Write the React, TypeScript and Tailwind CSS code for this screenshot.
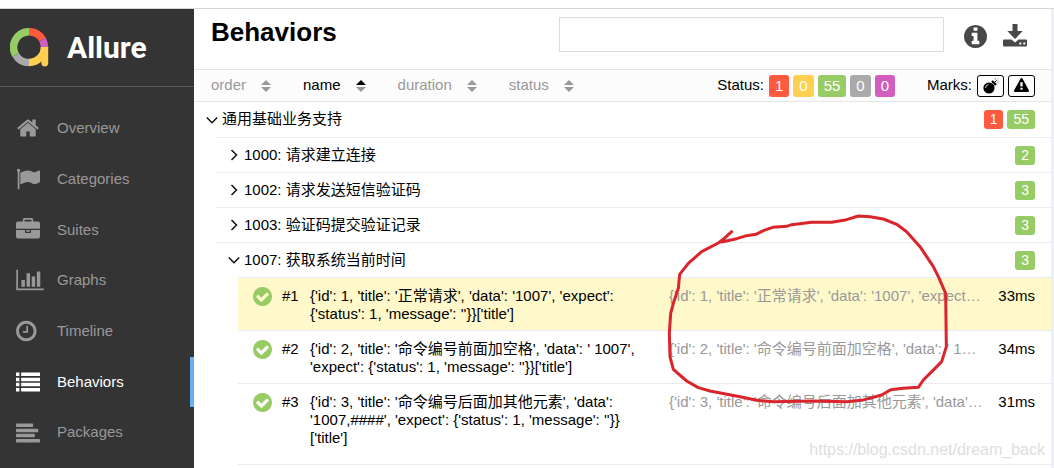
import { ReactNode } from 'react';
import clsx from 'clsx';

const DISC = 'M1664 896q0 209-103 385.5t-279.5 279.5-385.5 103-385.5-103-279.5-279.5-103-385.5 103-385.5 279.5-279.5 385.5-103 385.5 103 279.5 279.5 103 385.5z';

const ICONS = {
  home: 'M1472 992v480q0 26-19 45t-45 19h-384v-384h-256v384h-384q-26 0-45-19t-19-45v-480q0-1 .5-3t.5-3l575-474 575 474q1 2 1 6zm223-69l-62 74q-8 9-21 11h-3q-13 0-21-7l-692-577-692 577q-12 8-24 7-13-2-21-11l-62-74q-8-10-7-23.5t11-21.5l719-599q32-26 76-26t76 26l244 204v-195q0-14 9-23t23-9h192q14 0 23 9t9 23v408l219 182q10 8 11 21.5t-7 23.5z',
  flag: 'M320 256q0 72-64 110v1266q0 13-9.5 22.5t-22.5 9.5h-64q-13 0-22.5-9.5t-9.5-22.5v-1266q-64-38-64-110 0-53 37.5-90.5t90.5-37.5 90.5 37.5 37.5 90.5zm1472 64v763q0 25-12.5 38.5t-39.5 27.5q-215 116-369 116-61 0-123.5-22t-108.5-48-115.5-48-142.5-22q-192 0-464 146-17 9-33 9-26 0-45-19t-19-45v-742q0-32 31-55 21-14 79-43 236-120 421-120 107 0 200 29t219 88q38 19 88 19 54 0 117.5-21t110-47 88-47 54.5-21q26 0 45 19t19 45z',
  briefcase:
    'M640 256h512v-128h-512v128zm1152 640v480q0 66-47 113t-113 47h-1472q-66 0-113-47t-47-113v-480h672v160q0 26 19 45t45 19h320q26 0 45-19t19-45v-160h672zm-768 0v128h-256v-128h256zm768-480v384h-1792v-384q0-66 47-113t113-47h352v-160q0-40 28-68t68-28h576q40 0 68 28t28 68v160h352q66 0 113 47t47 113z',
  chart:
    'M640 896v512h-256v-512h256zm384-512v1024h-256v-1024h256zm1024 1152v128h-2048v-1536h128v1408h1920zm-640-896v768h-256v-768h256zm384-384v1152h-256v-1152h256z',
  clock:
    'M1024 544v448q0 14-9 23t-23 9h-320q-14 0-23-9t-9-23v-64q0-14 9-23t23-9h224v-352q0-14 9-23t23-9h64q14 0 23 9t9 23zm416 352q0-148-73-273t-198-198-273-73-273 73-198 198-73 273 73 273 198 198 273 73 273-73 198-198 73-273z' +
    DISC,
  list: 'M0 192h256v256h-256zM384 192h1408v256h-1408zM0 576h256v256h-256zM384 576h1408v256h-1408zM0 960h256v256h-256zM384 960h1408v256h-1408zM0 1344h256v256h-256zM384 1344h1408v256h-1408z',
  align:
    'M64 192h1152q64 0 64 64v128q0 64-64 64h-1152q-64 0-64-64v-128q0-64 64-64zM64 576h1536q64 0 64 64v128q0 64-64 64h-1536q-64 0-64-64v-128q0-64 64-64zM64 960h1280q64 0 64 64v128q0 64-64 64h-1280q-64 0-64-64v-128q0-64 64-64zM64 1344h1664q64 0 64 64v128q0 64-64 64h-1664q-64 0-64-64v-128q0-64 64-64z',
  info:
    'M1152 1376v-160q0-14-9-23t-23-9h-96v-512q0-14-9-23t-23-9h-320q-14 0-23 9t-9 23v160q0 14 9 23t23 9h96v320h-96q-14 0-23 9t-9 23v160q0 14 9 23t23 9h448q14 0 23-9t9-23zm-128-896v-160q0-14-9-23t-23-9h-192q-14 0-23 9t-9 23v160q0 14 9 23t23 9h192q14 0 23-9t9-23z' +
    DISC,
  check:
    'M1412 734q0-28-18-46l-91-90q-19-19-45-19t-45 19l-408 407-226-226q-19-19-45-19t-45 19l-91 90q-18 18-18 46 0 27 18 45l362 362q19 19 45 19 27 0 46-19l543-543q18-18 18-45z' +
    DISC,
  warning:
    'M1024 1375v-190q0-14-9.5-23.5t-22.5-9.5h-192q-13 0-22.5 9.5t-9.5 23.5v190q0 14 9.5 23.5t22.5 9.5h192q13 0 22.5-9.5t9.5-23.5zm-2-374l18-459q0-12-10-19-13-11-24-11h-220q-11 0-24 11-10 7-10 21l17 457q0 10 10 16.5t24 6.5h185q14 0 23.5-6.5t10.5-16.5zm-14-934l768 1408q35 63-2 126-17 29-46.5 46t-63.5 17h-1536q-34 0-63.5-17t-46.5-46q-37-63-2-126l768-1408q17-31 47-49t65-18 65 18 47 49z',
};

function Icon({ name, viewBox = '0 0 1792 1792', className }: { name: keyof typeof ICONS; viewBox?: string; className?: string }) {
  return (
    <svg viewBox={viewBox} className={className} fill="currentColor" fillRule="evenodd" aria-hidden="true">
      <path d={ICONS[name]} />
    </svg>
  );
}

const NAV: { label: string; icon: keyof typeof ICONS; box?: string; size?: string }[] = [
  { label: 'Overview', icon: 'home', box: '0 0 1792 1792' },
  { label: 'Categories', icon: 'flag' },
  { label: 'Suites', icon: 'briefcase' },
  { label: 'Graphs', icon: 'chart', box: '0 0 2048 1792', size: 'w-7 h-6' },
  { label: 'Timeline', icon: 'clock', box: '128 0 1792 1792' },
  { label: 'Behaviors', icon: 'list' },
  { label: 'Packages', icon: 'align' },
];

const SUITES = [
  { name: '1000: 请求建立连接', count: 2 },
  { name: '1002: 请求发送短信验证码', count: 3 },
  { name: '1003: 验证码提交验证记录', count: 3 },
  { name: '1007: 获取系统当前时间', count: 3, open: true },
];

const CASES = [
  {
    name: "{'id': 1, 'title': '正常请求', 'data': '1007', 'expect': {'status': 1, 'message': ''}}['title']",
    params: "{'id': 1, 'title': '正常请求', 'data': '1007', 'expect…",
    time: '33ms',
  },
  {
    name: "{'id': 2, 'title': '命令编号前面加空格', 'data': ' 1007', 'expect': {'status': 1, 'message': ''}}['title']",
    params: "{'id': 2, 'title': '命令编号前面加空格', 'data': ' 1…",
    time: '34ms',
  },
  {
    name: "{'id': 3, 'title': '命令编号后面加其他元素', 'data': '1007,####', 'expect': {'status': 1, 'message': ''}}['title']",
    params: "{'id': 3, 'title': '命令编号后面加其他元素', 'data'…",
    time: '31ms',
  },
];

function Logo() {
  return (
    <svg viewBox="0 0 39 39" className="w-[39px] h-[39px]" fill="none" strokeWidth="7.5" aria-hidden="true">
      <path d="M19 34.5A15.5 15.5 0 0 1 5.6 26.8" stroke="#a9a9a9" />
      <path d="M5.6 26.8A15.5 15.5 0 0 1 19 3.7" stroke="#97cc64" />
      <path d="M19 3.7A15.5 15.5 0 0 1 32.4 11.5" stroke="#fd5a3e" />
      <path d="M32.4 11.5A15.5 15.5 0 0 1 34.5 19.3" stroke="#d35ebe" />
      <path d="M34.5 19A15.5 15.5 0 0 1 19 34.5" stroke="#ffd050" />
      <path d="M30.8 19H38.2V35a3.4 3.4 0 0 1-6.8 0z" fill="#ffd050" />
    </svg>
  );
}

function Chevron({ open }: { open?: boolean }) {
  return (
    <svg viewBox="0 0 12 12" className="w-3 h-3 shrink-0" fill="none" stroke="#111" strokeWidth="1.5" aria-hidden="true">
      <path d={open ? 'M.8 3.5L6 8.7 11.2 3.5' : 'M3.5 1L8.5 6 3.5 11'} />
    </svg>
  );
}

function SortIcon({ active }: { active?: boolean }) {
  return (
    <svg viewBox="0 0 10 12" className="w-[10px] h-3" aria-hidden="true">
      <path d="M0 5L5 0l5 5z" fill={active ? '#000' : '#999'} />
      <path d="M0 7h10l-5 5z" fill="#999" />
    </svg>
  );
}

function Badge({ color, children }: { color: string; children: ReactNode }) {
  return (
    <span className={clsx('h-[19px] px-[6px] rounded-[3px] text-sm leading-[19px] text-white', color)}>{children}</span>
  );
}

const STATUSES = [
  { label: 'failed', count: 1, color: 'bg-[#fd5a3e]' },
  { label: 'broken', count: 0, color: 'bg-[#ffd050]' },
  { label: 'passed', count: 55, color: 'bg-[#97cc64]' },
  { label: 'skipped', count: 0, color: 'bg-[#aaaaaa]' },
  { label: 'unknown', count: 0, color: 'bg-[#d35ebe]' },
];

function Sidebar() {
  return (
    <aside className="w-[194px] shrink-0 bg-[#343434]">
      <div className="h-[78px] pl-[10px] flex items-center gap-[18px] border-b border-[#5a5a5a]">
        <Logo />
        <span className="text-[30px] font-bold text-white font-[Roboto,sans-serif]">Allure</span>
      </div>
      <nav className="mt-4 h-[355px] grid grid-rows-7">
        {NAV.map((item) => {
          const active = item.label === 'Behaviors';
          return (
            <a
              key={item.label}
              href="#"
              className={clsx(
                'flex items-center pl-4 border-r-4',
                active ? 'text-white border-[#64b0f2]' : 'text-[#999] border-transparent'
              )}
            >
              <span className="w-[41px]">
                <Icon name={item.icon} viewBox={item.box} className={item.size ?? 'w-6 h-6'} />
              </span>
              {item.label}
            </a>
          );
        })}
      </nav>
    </aside>
  );
}

function Toolbar() {
  return (
    <div className="h-[33px] pl-[17px] pr-4 flex items-center justify-between bg-[#fcfcfc] border-y border-[#e5e5e8]">
      <div className="flex gap-8">
        {['order', 'name', 'duration', 'status'].map((key) => (
          <button
            key={key}
            className={clsx('flex items-center gap-[15px]', key === 'name' ? 'text-black' : 'text-[#999]')}
          >
            {key}
            <SortIcon active={key === 'name'} />
          </button>
        ))}
      </div>
      <div className="flex items-center">
        <span className="mr-[5px]">Status:</span>
        <div className="flex gap-1">
          {STATUSES.map((s) => (
            <button
              key={s.label}
              aria-label={s.label}
              className={clsx('h-[22px] px-[6px] rounded-[3px] leading-[22px] text-white', s.color)}
            >
              {s.count}
            </button>
          ))}
        </div>
        <span className="ml-8 mr-[5px]">Marks:</span>
        <div className="flex gap-1">
          <button aria-label="Flaky" className="w-[27px] h-[22px] flex items-center justify-center border border-black rounded-[3px]">
            <svg viewBox="0 0 16 16" className="w-4 h-4" aria-hidden="true">
              <circle cx="6" cy="10" r="5.6" />
              <path d="M8.2 3.8l1.6-1.6 4 4-1.6 1.6z" />
              <path d="M11.5 4.5L13.5 2.5" stroke="#000" />
              <path d="M2.5 10q0-3 3-3.4" stroke="#fff" strokeWidth=".8" fill="none" />
              <path d="M12.5 0v2M15.5 0l-1.5 1.5M14.3 3h1.7M11 .5l1 1M14 4l1.5 1" stroke="#aaa" strokeWidth=".8" />
            </svg>
          </button>
          <button aria-label="New failed" className="w-[27px] h-[22px] flex items-center justify-center border border-black rounded-[3px]">
            <Icon name="warning" className="w-[15px] h-[15px]" />
          </button>
        </div>
      </div>
    </div>
  );
}

function Tree() {
  return (
    <div>
      <div className="h-[35px] pl-3 pr-4 flex items-center gap-1">
        <Chevron open />
        <span className="flex-1">通用基础业务支持</span>
        <Badge color="bg-[#fd5a3e]">1</Badge>
        <Badge color="bg-[#97cc64]">55</Badge>
      </div>
      <ul className="ml-[22px]">
        {SUITES.map((suite) => (
          <li key={suite.name} className="border-t border-[#e9ebee]">
            <div className="h-[34px] pl-3 pr-4 flex items-center gap-1">
              <Chevron open={suite.open} />
              <span className="flex-1">{suite.name}</span>
              <Badge color="bg-[#97cc64]">{suite.count}</Badge>
            </div>
            {suite.open && (
              <ul className="ml-[22px] pb-[10px] border-b border-[#e9ebee]">
                {CASES.map((test, i) => (
                  <li
                    key={test.time}
                    className={clsx(
                      'flex items-start pl-[15px] pr-4 pt-[9px] pb-[7px] border-t border-[#e9ebee] leading-[18px]',
                      i === 0 && 'bg-[#fff8ca]'
                    )}
                  >
                    <Icon name="check" viewBox="128 128 1536 1536" className="w-[19px] h-[19px] mr-[10px] shrink-0 text-[#97cc64]" />
                    <span className="w-7 shrink-0">#{i + 1}</span>
                    <a href="#" className="flex-1 min-w-0 mr-[14px]">{test.name}</a>
                    <span className="w-[320px] shrink-0 whitespace-nowrap text-[#999]">{test.params}</span>
                    <span className="w-[46px] shrink-0 text-right">{test.time}</span>
                  </li>
                ))}
              </ul>
            )}
          </li>
        ))}
      </ul>
    </div>
  );
}

export default function App() {
  return (
    <div className="relative min-h-screen flex flex-col bg-white pt-2 text-[15px] text-black font-['Liberation_Sans','Noto_Sans_CJK_SC',sans-serif]">
      <div className="flex-1 flex border-t border-[#d6d6d6]">
        <Sidebar />
        <main className="flex-1 min-w-0 border-r-3 border-[#edf1f6]">
          <header className="h-[60px] pl-[17px] pr-6 flex items-start">
            <h1 className="w-[348px] mt-2 text-[26px] leading-[30px] font-bold">Behaviors</h1>
            <input
              type="text"
              aria-label="Search"
              className="flex-1 min-w-0 h-[35px] mt-2 px-2 border border-[#dcdcdc] bg-white outline-none"
            />
            <button aria-label="Information" className="mt-4 ml-5 text-[#484848]">
              <Icon name="info" viewBox="128 128 1536 1536" className="w-[23px] h-[23px]" />
            </button>
            <button aria-label="Download CSV" className="mt-[15px] ml-4 text-[#484848]">
              <svg viewBox="0 0 24 24" className="w-6 h-6" fill="currentColor" aria-hidden="true">
                <path d="M9.5 0h5v7h5.2L12 15 4.3 7h5.2z" />
                <path
                  fillRule="evenodd"
                  d="M1 15.5h7.5L12 18.5l3.5-3H23a1 1 0 0 1 1 1v5a1 1 0 0 1-1 1H1a1 1 0 0 1-1-1v-5a1 1 0 0 1 1-1zM16.3 18.5h2v2h-2zM20.3 18.5h2v2h-2z"
                />
              </svg>
            </button>
          </header>
          <Toolbar />
          <Tree />
        </main>
      </div>

      {/* Hand-drawn marker around the parameters column */}
      <svg
        viewBox="75 156 855 579"
        className="absolute top-[212px] right-[104px] w-[285px] h-[193px] pointer-events-none"
        fill="none"
        stroke="#d9252b"
        strokeWidth="9"
        strokeLinecap="round"
        strokeLinejoin="round"
        aria-hidden="true"
      >
        <path d="M275 215L252 236 245 246 290 236 320 227 348 223 370 212 398 202 440 199 455 194 515 187 575 187 620 179 655 168 690 170 730 177 770 193 800 215 840 260 860 290 880 320 895 350 917 400 919 560 905 605 870 640 850 660 835 682 790 685 752 689 725 705 665 721 620 725 520 723 400 725 350 721 300 710 210 693 175 683 140 663 100 628 90 590 88 520 92 460 100 430 115 385 119 343 145 310 185 275 235 249 252 236" />
      </svg>

      <span className="absolute right-[9px] bottom-2 text-base leading-5 text-[#dedede]">
        https://blog.csdn.net/dream_back
      </span>
    </div>
  );
}
